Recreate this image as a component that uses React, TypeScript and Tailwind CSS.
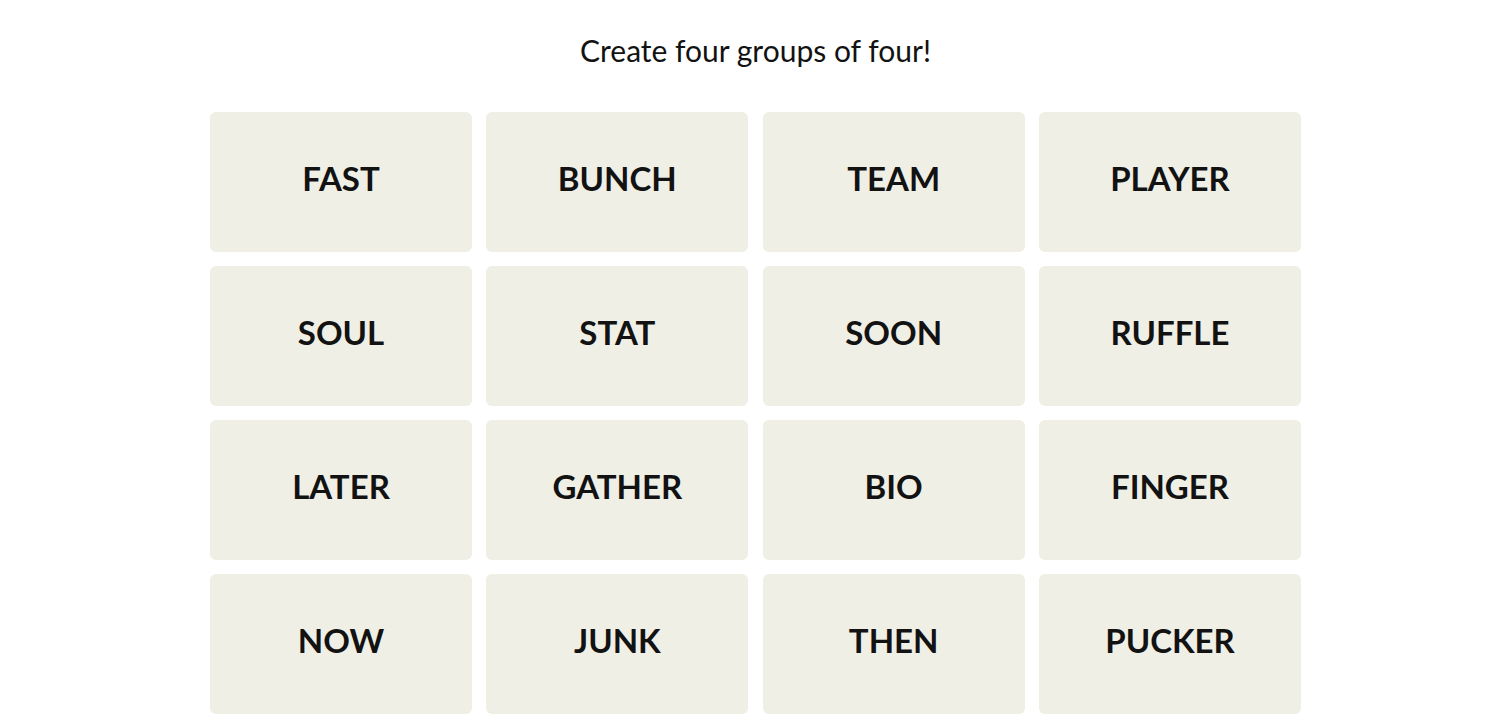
import React from "react";

const words = [
  "FAST", "BUNCH", "TEAM", "PLAYER",
  "SOUL", "STAT", "SOON", "RUFFLE",
  "LATER", "GATHER", "BIO", "FINGER",
  "NOW", "JUNK", "THEN", "PUCKER",
];

export default function App() {
  return (
    <div className="min-h-[720px] w-full bg-white flex justify-center pl-[11px]" style={{ fontFamily: "Lato, 'Liberation Sans', sans-serif" }}>
      <div className="flex flex-col items-center">
        <div className="h-[112px] pt-[32px] text-[30px] leading-[36px] text-[#121212]">
          Create four groups of four!
        </div>
        <div className="grid w-[1091px] grid-cols-4 gap-x-[14.33px] gap-y-[14px]">
          {words.map((w) => (
            <div
              key={w}
              className="flex h-[140px] items-center justify-center rounded-[6px] bg-[#efefe6] pb-[6px] text-[33px] font-bold text-[#121212]"
            >
              {w}
            </div>
          ))}
        </div>
      </div>
    </div>
  );
}
